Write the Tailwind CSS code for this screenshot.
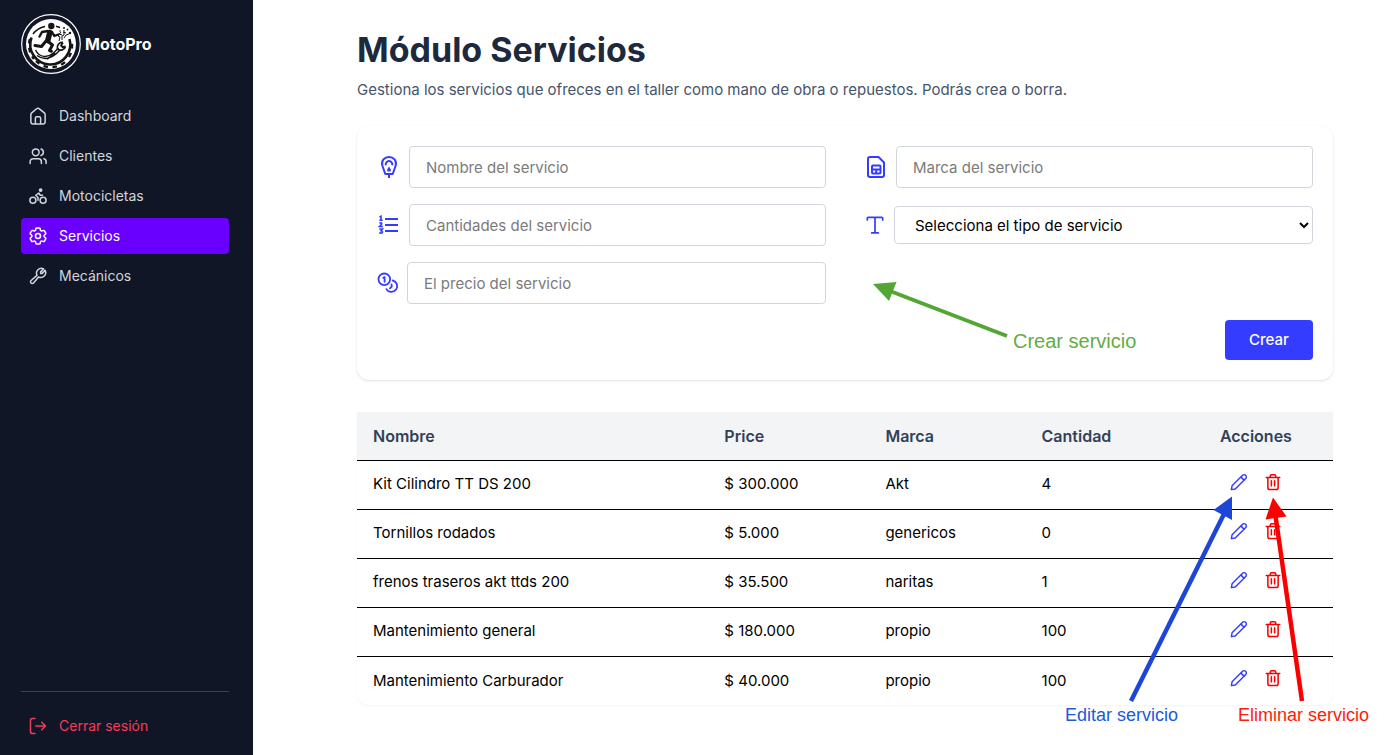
<!DOCTYPE html>
<html lang="es">
<head>
<meta charset="utf-8">
<meta name="viewport" content="width=device-width, initial-scale=1">
<title>MotoPro - Servicios</title>
<script src="https://cdn.jsdelivr.net/npm/@tailwindcss/browser@4"></script>
</head>
<body class="bg-white font-['Inter','Liberation_Sans',sans-serif] text-[15px] text-black">
<svg class="hidden" aria-hidden="true">
  <symbol id="pencil" viewBox="0 0 20 20" fill="none" stroke="currentColor" stroke-width="1.6" stroke-linecap="round" stroke-linejoin="round">
    <path d="M1.500 18.500l.8-4.300L14 2.500a2.300 2.300 0 0 1 3.300 0l.2.200a2.300 2.300 0 0 1 0 3.300L5.800 17.700z"/><path d="M12.700 4c.2 2 1.400 3.200 3.400 3.400"/>
  </symbol>
  <symbol id="trash" viewBox="0 0 20 20" fill="none" stroke="currentColor" stroke-width="1.700" stroke-linecap="round" stroke-linejoin="round">
    <path d="M2.500 5h15M4.300 5v11.300a2 2 0 0 0 2 2h7.400a2 2 0 0 0 2-2V5M7 5V3.200A1.300 1.300 0 0 1 8.300 1.900h3.400A1.300 1.300 0 0 1 13 3.200V5M8.200 8.700v5.600M11.800 8.700v5.600"/>
  </symbol>
</svg>
<div class="flex min-h-screen">
  <aside class="flex w-[253px] shrink-0 flex-col bg-[#111627] pt-3.5 pr-6 pb-[11px] pl-[21px] text-sm text-gray-300">
    <div class="flex items-center gap-1">
      <svg class="size-[60px]" viewBox="0 0 60 60" role="img" aria-label="MotoPro">
        <circle cx="30" cy="30" r="29.300" fill="none" stroke="#fff" stroke-width="1.200"/>
        <circle cx="30" cy="30" r="25" fill="#fff"/>
        <g fill="none" stroke="#151515" stroke-linejoin="round">
          <path d="M10.500 23.500A20 20 0 1 0 48.500 25" stroke-width="2.600"/>
          <path d="M8.900 25A21.500 21.500 0 0 0 13 45M15 47A21.500 21.500 0 0 0 47 45M48 43A21.500 21.500 0 0 0 50.500 27" stroke-width="2.400" stroke-dasharray="4.500 4.500"/>
          <path d="M12 20A20 20 0 0 1 24 12.500M35 12.300l4 1.200" stroke-width="1.600"/>
          <g stroke-linecap="round">
            <path d="M28.800 18.500l-2 8" stroke-width="5.500"/>
            <path d="M27 17l-6 1-2.500 4.500M31 18l2.300 4 4-1.500" stroke-width="2.400"/>
            <path d="M27 27.500l4.500 3.500-3 5.500 2 .8M25 27l-4.500 5.500-6.500-1" stroke-width="3"/>
          </g>
          <path d="M14.500 36c4 8 12 8 18 3l5-5M16 41.500c7 5.500 14 2.500 19-1.500l4-4M26 45l8.500-5.500" stroke-width="1.500"/>
          <path d="M42 28.500a5 5 0 0 0-5.500 6.500M36.500 35a5 5 0 0 0 8-2.500M42 28.500l-2 3 1.500 1.500 3-.5" stroke-width="1.800"/>
          <path d="M38 27l1-4-2-1 3-4M41 26l0-4 2-1 0-5M43 24l2-3 3-1M38 20l3 1M42 18l3 1" stroke-width="1"/>
        </g>
        <circle cx="30.300" cy="12" r="3.200" fill="#151515"/>
        <g fill="#151515"><circle cx="43" cy="14" r="1"/><circle cx="46.500" cy="15.500" r=".9"/><circle cx="49" cy="19" r="1.200"/><circle cx="39" cy="17" r=".8"/></g>
      </svg>
      <span class="text-base font-bold text-white">MotoPro</span>
    </div>
    <nav class="mt-6 flex flex-col gap-1">
      <a href="#" class="flex h-9 items-center gap-3 rounded px-2">
        <svg class="size-[18px]" viewBox="0 0 24 24" fill="none" stroke="currentColor" stroke-width="2" stroke-linecap="round" stroke-linejoin="round"><path d="M2.500 10.200c0-.9.400-1.700 1.100-2.300l6.500-5.500a3 3 0 0 1 3.800 0l6.500 5.500c.7.600 1.100 1.400 1.100 2.300V19.500a3 3 0 0 1-3 3h-13a3 3 0 0 1-3-3z"/><path d="M8.500 22v-7a2 2 0 0 1 2-2h3a2 2 0 0 1 2 2v7"/></svg>
        Dashboard</a>
      <a href="#" class="flex h-9 items-center gap-3 rounded px-2">
        <svg class="size-[18px]" viewBox="0 0 24 24" fill="none" stroke="currentColor" stroke-width="2" stroke-linecap="round" stroke-linejoin="round"><circle cx="9" cy="7" r="4.500"/><path d="M1.500 22v-2.500a4 4 0 0 1 4-4h7a4 4 0 0 1 4 4V22M16 2.700a4.500 4.500 0 0 1 0 8.600M22.800 22v-2.500a4 4 0 0 0-3-3.900"/></svg>
        Clientes</a>
      <a href="#" class="flex h-9 items-center gap-3 rounded px-2">
        <svg class="size-[18px]" viewBox="0 0 24 24" fill="none" stroke="currentColor" stroke-width="2" stroke-linecap="round" stroke-linejoin="round"><circle cx="18.800" cy="17.500" r="4"/><circle cx="5.200" cy="17.500" r="4"/><circle cx="15.500" cy="4" r="1.500" fill="currentColor"/><path d="M12 17.500V14l-3-3 4-3 2 3h3"/></svg>
        Motocicletas</a>
      <a href="#" aria-current="page" class="flex h-9 items-center gap-3 rounded bg-[#6900ff] px-2 text-white">
        <svg class="size-[18px]" viewBox="2 2 20 20" fill="none" stroke="currentColor" stroke-width="1.700" stroke-linecap="round" stroke-linejoin="round"><path d="M9.594 3.940c.090-.542.560-.940 1.110-.940h2.593c.550 0 1.020.398 1.110.940l.213 1.281c.063.374.313.686.645.870.074.040.147.083.220.127.325.196.720.257 1.075.124l1.217-.456a1.125 1.125 0 0 1 1.370.490l1.296 2.247a1.125 1.125 0 0 1-.260 1.431l-1.003.827c-.293.241-.438.613-.430.992a7.723 7.723 0 0 1 0 .255c-.008.378.137.750.430.991l1.004.827c.424.350.534.955.260 1.430l-1.298 2.247a1.125 1.125 0 0 1-1.369.491l-1.217-.456c-.355-.133-.750-.072-1.076.124a6.470 6.470 0 0 1-.220.128c-.331.183-.581.495-.644.869l-.213 1.281c-.090.543-.560.940-1.110.940h-2.594c-.550 0-1.019-.398-1.110-.940l-.213-1.281c-.062-.374-.312-.686-.644-.870a6.520 6.520 0 0 1-.220-.127c-.325-.196-.720-.257-1.076-.124l-1.217.456a1.125 1.125 0 0 1-1.369-.490l-1.297-2.247a1.125 1.125 0 0 1 .260-1.431l1.004-.827c.292-.240.437-.613.430-.991a6.932 6.932 0 0 1 0-.255c.007-.380-.138-.751-.430-.992l-1.004-.827a1.125 1.125 0 0 1-.260-1.430l1.297-2.247a1.125 1.125 0 0 1 1.370-.491l1.216.456c.356.133.751.072 1.076-.124.072-.044.146-.086.220-.128.332-.183.582-.495.644-.869z"/><circle cx="12" cy="12" r="2.800"/></svg>
        Servicios</a>
      <a href="#" class="flex h-9 items-center gap-3 rounded px-2">
        <svg class="size-[18px]" viewBox="0 0 24 24" fill="none" stroke="currentColor" stroke-width="2" stroke-linecap="round" stroke-linejoin="round"><path d="M15.500 6.500v2h2l4-4a6.500 6.500 0 0 1-8.700 8.800L6 21.200a2.300 2.300 0 0 1-3.300.1 2.300 2.300 0 0 1 .1-3.300L10.700 11.200A6.500 6.500 0 0 1 19.500 2.500z"/></svg>
        Mecánicos</a>
    </nav>
    <div class="mt-auto border-t border-slate-700 pt-4">
      <a href="#" class="flex h-9 items-center gap-3 px-2 text-[#f53b57]">
        <svg class="size-[18px]" viewBox="0 0 24 24" fill="none" stroke="currentColor" stroke-width="2" stroke-linecap="round" stroke-linejoin="round"><path d="M8 2H4.500a2.500 2.500 0 0 0-2.500 2.500v15A2.500 2.500 0 0 0 4.500 22H8M9 12h13M17 7l5 5-5 5"/></svg>
        Cerrar sesión</a>
    </div>
  </aside>

  <main class="relative min-w-0 flex-1 pt-[30px] pr-[58px] pl-[104px]">
    <h1 class="text-[34px] leading-10 font-bold text-slate-800">Módulo Servicios</h1>
    <p class="mt-2 leading-6 text-slate-600">Gestiona los servicios que ofreces en el taller como mano de obra o repuestos. Podrás crea o borra.</p>

    <form class="mt-6 rounded-xl bg-white p-5 shadow-sm">
      <div class="grid grid-cols-2 gap-x-[38px] gap-y-4 text-[#343cff]">
        <label class="flex items-center gap-2">
          <svg class="size-6 shrink-0" viewBox="0 0 24 24" fill="none" stroke="currentColor" stroke-width="2"><path d="M8.300 19L5.300 10.500C4 5.500 7.500 2 12 2s8 3.500 6.700 8.500L15.700 19z" stroke-linejoin="round"/><path d="M12 19v4M8.800 10.200a3.300 3.300 0 1 1 6.400 0"/><path d="M10.300 16.500v-2.200L12 11.500l1.700 2.800v2.200z" fill="currentColor" stroke="none"/></svg>
          <input type="text" aria-label="Nombre del servicio" placeholder="Nombre del servicio" class="h-[42px] w-full min-w-0 rounded border border-gray-300 px-4 text-black placeholder:text-[#7b7b7b]">
        </label>
        <label class="flex items-center gap-2">
          <svg class="size-6 shrink-0" viewBox="0 0 24 24" fill="none" stroke="currentColor" stroke-width="2" stroke-linejoin="round"><path d="M6 2h8.500L20 7.500V20a2 2 0 0 1-2 2H6a2 2 0 0 1-2-2V4a2 2 0 0 1 2-2z"/><rect x="8" y="10.500" width="8.500" height="8" rx="1"/><path d="M8 14.500h8.500M12.200 14.500v4"/></svg>
          <input type="text" aria-label="Marca del servicio" placeholder="Marca del servicio" class="h-[42px] w-full min-w-0 rounded border border-gray-300 px-4 text-black placeholder:text-[#7b7b7b]">
        </label>
        <label class="flex items-center gap-2">
          <svg class="size-6 shrink-0" viewBox="0 0 24 24" fill="none" stroke="currentColor"><path d="M8 6h13M8 12h13M8 18h13" stroke-width="1.800"/><path d="M2.500 4l1.500-.7v4M2.300 7.300h3.400M2.500 10.300c1.200-1 3-.2 2 1l-2 2.200h3.400M2.300 16h3.200l-1.400 1.700c2 .2 1.700 2.600-.2 2.400-.7 0-1.200-.3-1.500-.8" stroke-width="1.600"/></svg>
          <input type="text" aria-label="Cantidades del servicio" placeholder="Cantidades del servicio" class="h-[42px] w-full min-w-0 rounded border border-gray-300 px-4 text-black placeholder:text-[#7b7b7b]">
        </label>
        <label class="flex items-center gap-2">
          <svg class="size-[22px] shrink-0" viewBox="0 0 22 22" fill="none" stroke="currentColor" stroke-width="1.700" stroke-linecap="round" stroke-linejoin="round"><path d="M3.300 6V4.300a1 1 0 0 1 1-1h13.400a1 1 0 0 1 1 1V6M11 3.300v15.400M7.700 18.900h6.600"/></svg>
          <select aria-label="Tipo de servicio" class="h-[38px] w-full min-w-0 rounded border border-gray-300 bg-white px-4 text-black"><option>Selecciona el tipo de servicio</option><option>Mano de obra</option><option>Repuesto</option></select>
        </label>
        <label class="flex items-center gap-2">
          <svg class="size-[22px] shrink-0" viewBox="0 0 22 22" fill="none" stroke="currentColor" stroke-width="1.800" stroke-linecap="round" stroke-linejoin="round"><circle cx="7.300" cy="7.300" r="5.800"/><path d="M6.300 5.800l1.300-.7V9.800M15.700 8.500a5.800 5.800 0 1 1-6.300 8.600M14.500 12.500l.3 1.800-1.800 2"/></svg>
          <input type="text" aria-label="El precio del servicio" placeholder="El precio del servicio" class="h-[42px] w-full min-w-0 rounded border border-gray-300 px-4 text-black placeholder:text-[#7b7b7b]">
        </label>
      </div>
      <div class="mt-4 flex justify-end">
        <button type="submit" class="h-10 w-[88px] rounded bg-[#343cff] font-medium text-white">Crear</button>
      </div>
    </form>

    <table class="mt-8 w-full table-fixed rounded-b-xl text-left shadow-xs">
      <colgroup><col class="w-[36%]"><col class="w-[16.500%]"><col class="w-[16%]"><col class="w-[15.700%]"><col></colgroup>
      <thead class="bg-gray-100 text-base text-slate-700">
        <tr class="h-12 border-b border-black"><th class="px-4 font-semibold">Nombre</th><th class="px-4 font-semibold">Price</th><th class="px-4 font-semibold">Marca</th><th class="px-4 font-semibold">Cantidad</th><th class="px-4 text-center font-semibold">Acciones</th></tr>
      </thead>
      <tbody id="rows"></tbody>
    </table>

    <svg class="pointer-events-none absolute top-0 left-0 h-[755px] w-[1138px]" viewBox="253 0 1138 755" aria-hidden="true">
      <g stroke="#53a634" fill="#53a634"><path d="M1007 336L890 291" stroke-width="4"/><path d="M873 284L896.500 282L889 301z" stroke="none"/></g>
      <g stroke="#1d45d8" fill="#1d45d8"><path d="M1131 701L1224 514" stroke-width="4.500"/><path d="M1232 496.500L1213.500 510L1232 520z" stroke="none"/></g>
      <g stroke="#fb0000" fill="#fb0000"><path d="M1302 701L1275.500 516" stroke-width="4.500"/><path d="M1273 497.500L1265.500 519.500L1286.500 516.500z" stroke="none"/></g>
    </svg>
    <span class="absolute top-[329px] left-[760px] font-['Liberation_Sans',sans-serif] text-xl leading-6 whitespace-nowrap text-[#5fae43]">Crear servicio</span>
    <span class="absolute top-[703px] left-[812px] font-['Liberation_Sans',sans-serif] text-lg leading-6 whitespace-nowrap text-[#2159dc]">Editar servicio</span>
    <span class="absolute top-[703px] left-[985px] font-['Liberation_Sans',sans-serif] text-lg leading-6 whitespace-nowrap text-[#fc1c0c]">Eliminar servicio</span>
  </main>
</div>
<script>
  const services = [
    ['Kit Cilindro TT DS 200', '$ 300.000', 'Akt', '4'],
    ['Tornillos rodados', '$ 5.000', 'genericos', '0'],
    ['frenos traseros akt ttds 200', '$ 35.500', 'naritas', '1'],
    ['Mantenimiento general', '$ 180.000', 'propio', '100'],
    ['Mantenimiento Carburador', '$ 40.000', 'propio', '100'],
  ];
  document.getElementById('rows').innerHTML = services.map(s => `
    <tr class="h-[49px] border-b border-black last:border-0">
      ${s.map(v => `<td class="px-4">${v}</td>`).join('')}
      <td class="px-4"><div class="flex justify-center gap-4 pb-1.5">
        <button type="button" aria-label="Editar ${s[0]}" class="text-[#343cff]"><svg class="size-[18px]"><use href="#pencil"/></svg></button>
        <button type="button" aria-label="Eliminar ${s[0]}" class="text-[#f80000]"><svg class="size-[18px]"><use href="#trash"/></svg></button>
      </div></td>
    </tr>`).join('');
</script>
</body>
</html>
